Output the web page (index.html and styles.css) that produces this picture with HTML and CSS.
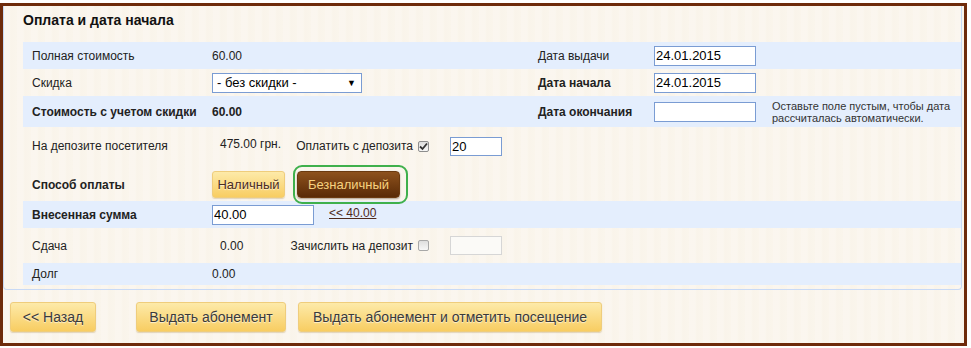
FILE: index.html
```html
<!DOCTYPE html>
<html lang="ru">
<head>
  <meta charset="UTF-8">
  <meta name="viewport" content="width=device-width, initial-scale=1.0">
  <title>Оплата и дата начала</title>
  <link rel="stylesheet" href="styles.css">
</head>
<body>
  <div class="frame">
    <div class="panel">
      <h2 class="panel-title">Оплата и дата начала</h2>

      <div class="row row-blue">
        <span class="label">Полная стоимость</span>
        <span class="value">60.00</span>
        <span class="side-label">Дата выдачи</span>
        <input type="text" class="field field-date" value="24.01.2015">
        <span></span>
      </div>

      <div class="row">
        <span class="label">Скидка</span>
        <div class="select">
          <select>
            <option>- без скидки -</option>
          </select>
          <span class="select-arrow">▼</span>
        </div>
        <span class="side-label bold">Дата начала</span>
        <input type="text" class="field field-date" value="24.01.2015">
        <span></span>
      </div>

      <div class="row row-blue row-tall">
        <span class="label bold">Стоимость с учетом скидки</span>
        <span class="value bold">60.00</span>
        <span class="side-label bold">Дата окончания</span>
        <input type="text" class="field field-date" value="">
        <span class="hint">Оставьте поле пустым, чтобы дата<br>рассчиталась автоматически.</span>
      </div>

      <div class="row row-deposit">
        <span class="label">На депозите посетителя</span>
        <div class="inline">
          <span class="amount amount-up">475.00 грн.</span>
          <label class="check-label"><span>Оплатить с депозита</span>
            <span class="check check-on">
              <svg width="9" height="9" viewBox="0 0 9 9"><path d="M1 4.5 L3.5 7 L8 1.5" fill="none" stroke="#333" stroke-width="1.8"/></svg>
            </span>
          </label>
          <input type="text" class="field field-small" value="20">
        </div>
      </div>

      <div class="row row-method">
        <span class="label bold">Способ оплаты</span>
        <div class="pay-toggle">
          <button class="btn btn-gold btn-pay">Наличный</button>
          <div class="pay-focus">
            <button class="btn btn-brown">Безналичный</button>
          </div>
        </div>
      </div>

      <div class="row row-blue">
        <span class="label bold">Внесенная сумма</span>
        <div class="inline">
          <input type="text" class="field field-sum" value="40.00">
          <a href="#" class="fill-link">&lt;&lt; 40.00</a>
        </div>
      </div>

      <div class="row row-change">
        <span class="label">Сдача</span>
        <div class="inline">
          <span class="amount">0.00</span>
          <label class="check-label"><span>Зачислить на депозит</span>
            <span class="check"></span>
          </label>
          <input type="text" class="field field-small field-off" value="" disabled>
        </div>
      </div>

      <div class="row row-blue row-short">
        <span class="label">Долг</span>
        <span class="value">0.00</span>
      </div>
    </div>

    <div class="actions">
      <button class="btn btn-gold btn-action btn-back">&lt;&lt; Назад</button>
      <button class="btn btn-gold btn-action btn-issue">Выдать абонемент</button>
      <button class="btn btn-gold btn-action btn-visit">Выдать абонемент и отметить посещение</button>
    </div>
  </div>
</body>
</html>
```

FILE: styles.css
```css
body {
  margin: 0;
  padding: 0;
  font-family: "Liberation Sans", Arial, sans-serif;
  font-size: 12px;
  color: #222;
  background-color: #fff;
}

.frame {
  box-sizing: border-box;
  width: 967px;
  margin-top: 3px;
  border: 3px solid #6e2b0b;
  background-color: #faf5ec;
  background-image: repeating-linear-gradient(90deg, rgba(255, 255, 255, 0.15) 0, rgba(255, 255, 255, 0.15) 6px, rgba(244, 236, 220, 0.12) 8px, rgba(255, 255, 255, 0) 14px);
}

.panel {
  margin-right: 2px;
  padding: 0 0 4px 19px;
  border: 1px solid #c8d9f5;
  border-top: none;
  border-radius: 0 0 4px 4px;
}

.panel-title {
  margin: 0;
  padding: 7px 0 14px 0;
  font-size: 14px;
  line-height: 15px;
  font-weight: bold;
  color: #111;
}

.row {
  display: grid;
  grid-template-columns: 189px 326px 116px 118px 1fr;
  align-items: center;
  height: 27px;
}

.row-blue {
  background-color: #e4eefd;
}

.row-tall {
  height: 31px;
}

.row-deposit {
  height: 38px;
}

.row-method {
  height: 36px;
}

.row-change {
  height: 35px;
}

.row-short {
  height: 22px;
}

.label {
  padding-left: 9px;
}

.bold {
  font-weight: bold;
}

.row .inline,
.row-method .pay-toggle {
  grid-column: 2 / -1;
}

.inline {
  display: flex;
  align-items: center;
}

.field {
  box-sizing: border-box;
  height: 20px;
  padding: 0 1px;
  font-family: "Liberation Sans", Arial, sans-serif;
  font-size: 13px;
  color: #000;
  background: #fff;
  border: 1px solid #7a9cd3;
  outline: none;
}

.field-date {
  width: 102px;
}

.field-small {
  width: 52px;
  height: 19px;
  margin-left: 18px;
}

.field-sum {
  width: 102px;
}

.field-off {
  background: #fbfaf7;
  border-color: #d6d6d6;
}

.select {
  box-sizing: border-box;
  display: flex;
  align-items: center;
  width: 150px;
  height: 20px;
  background: #fff;
  border: 1px solid #7a9cd3;
}

.select select {
  flex: 1;
  appearance: none;
  -webkit-appearance: none;
  padding: 0 0 0 4px;
  font-family: "Liberation Sans", Arial, sans-serif;
  font-size: 13px;
  color: #000;
  background: transparent;
  border: none;
  outline: none;
}

.select-arrow {
  padding-right: 5px;
  font-size: 9px;
  color: #000;
}

.hint {
  font-size: 11px;
  line-height: 12px;
  color: #333;
}

.amount {
  box-sizing: border-box;
  width: 86px;
  padding-left: 8px;
}

.amount-up {
  margin-bottom: 5px;
}

.check-label {
  box-sizing: border-box;
  display: flex;
  flex-shrink: 0;
  align-items: center;
  justify-content: flex-end;
  width: 134px;
  gap: 5px;
  padding-right: 3px;
  white-space: nowrap;
}

.check {
  box-sizing: border-box;
  display: flex;
  flex-shrink: 0;
  align-items: center;
  justify-content: center;
  width: 11px;
  height: 11px;
  border: 1px solid #a8a8a8;
  border-radius: 2px;
  background: linear-gradient(#dedede, #f7f7f7);
}

.check-on {
  border-color: #8e8e8e;
}

.pay-toggle {
  display: flex;
  align-items: center;
  align-self: start;
  gap: 8px;
}

.btn {
  font-family: "Liberation Sans", Arial, sans-serif;
  white-space: nowrap;
  cursor: pointer;
  border-radius: 3px;
}

.btn-gold {
  color: #3a3a3a;
  background: linear-gradient(#fdeaa9, #f8cd62);
  border: 1px solid #efcd7c;
  box-shadow: 0 1px 1px rgba(150, 110, 30, 0.25);
  text-shadow: 0 1px 1px rgba(255, 255, 255, 0.7);
}

.btn-pay {
  width: 73px;
  height: 27px;
  padding: 0;
  font-size: 13px;
  color: #4a2c22;
}

.pay-focus {
  padding: 4px 6px 4px 2px;
  border: 2px solid #3fb04c;
  border-radius: 9px;
}

.btn-brown {
  display: block;
  width: 103px;
  height: 27px;
  padding: 0;
  font-size: 13px;
  color: #f7d27f;
  background: linear-gradient(#8d511d, #5a2b07);
  border: 1px solid #6b3a10;
  border-radius: 4px;
  box-shadow: 0 1px 2px rgba(60, 30, 0, 0.4);
}

.fill-link {
  margin-left: 15px;
  margin-bottom: 4px;
  color: #4f2a1c;
}

.actions {
  display: flex;
  gap: 12px;
  padding: 12px 0 11px 7px;
}

.btn-action {
  height: 30px;
  padding: 0 12px;
  font-size: 14px;
}

.btn-back {
  width: 86px;
  padding: 0;
  margin-right: 28px;
}

.btn-issue {
  width: 150px;
}

.btn-visit {
  width: 304px;
}
```
